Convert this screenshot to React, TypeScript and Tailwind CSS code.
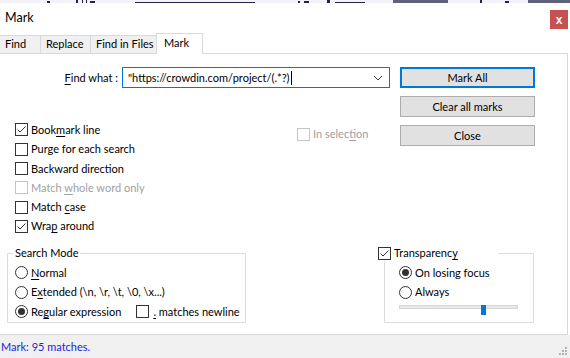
import React from 'react';

// Small helpers for the classic Win32 controls
const U: React.FC<{ children: React.ReactNode }> = ({ children }) => (
  <span className="underline decoration-1 underline-offset-[2px]">{children}</span>
);

const CheckBox: React.FC<{ checked?: boolean; disabled?: boolean }> = ({ checked, disabled }) => (
  <span
    className={`flex h-[13px] w-[13px] shrink-0 items-center justify-center border bg-white ${
      disabled ? 'border-[#c4c4c4]' : 'border-[#333333]'
    }`}
  >
    {checked && (
      <svg width="11" height="11" viewBox="0 0 11 11">
        <path d="M1.5 5.5 L4 8 L9.5 2.5" fill="none" stroke="#333333" strokeWidth="1" />
      </svg>
    )}
  </span>
);

const Radio: React.FC<{ checked?: boolean }> = ({ checked }) => (
  <span className="flex h-[13px] w-[13px] shrink-0 items-center justify-center rounded-full border border-[#333333] bg-white">
    {checked && <span className="h-[7px] w-[7px] rounded-full bg-[#333333]" />}
  </span>
);

const CheckRow: React.FC<{ checked?: boolean; disabled?: boolean; children: React.ReactNode }> = ({
  checked,
  disabled,
  children,
}) => (
  <div className={`flex h-[19.3px] items-center gap-[3px] ${disabled ? 'text-[#a0a0a0]' : ''}`}>
    <CheckBox checked={checked} disabled={disabled} />
    <span className="whitespace-nowrap">{children}</span>
  </div>
);

const RadioRow: React.FC<{ checked?: boolean; children: React.ReactNode }> = ({ checked, children }) => (
  <div className="flex h-[19.5px] items-center gap-[3px]">
    <Radio checked={checked} />
    <span className="whitespace-nowrap">{children}</span>
  </div>
);

const Button: React.FC<{ focused?: boolean; children: React.ReactNode }> = ({ focused, children }) => (
  <button
    className={`flex h-[21px] w-[135px] items-center justify-center bg-[#e1e1e1] ${
      focused ? 'border-2 border-[#0078d7]' : 'border border-[#adadad]'
    }`}
  >
    {children}
  </button>
);

const Tab: React.FC<{ width: string; children: React.ReactNode }> = ({ width, children }) => (
  <div className={`-ml-px h-[18px] whitespace-nowrap border border-b-0 border-[#d9d9d9] bg-[#f0f0f0] pl-[5px] ${width}`}>
    {children}
  </div>
);

export default function App() {
  return (
    <div className="flex h-[358px] w-[570px] flex-col overflow-hidden bg-white font-['Lato',sans-serif] text-[11px] leading-[16px] text-black">
      {/* sliver of the window behind */}
      <svg className="h-[3px] w-[570px] shrink-0 bg-[#f2f2f8]" viewBox="0 0 570 3">
        <g fill="#22224a">
          <rect x="47" y="1" width="3" height="2" />
          <rect x="76" y="0" width="2" height="3" />
          <rect x="82" y="0" width="1" height="3" />
          <rect x="86" y="0" width="1" height="3" />
          <rect x="90" y="1" width="5" height="2" />
          <rect x="135" y="2" width="120" height="1" />
          <rect x="298" y="1" width="2" height="2" />
          <rect x="304" y="1" width="5" height="2" />
          <rect x="327" y="0" width="3" height="3" />
          <rect x="335" y="2" width="30" height="1" />
          <rect x="393" y="0" width="55" height="3" opacity="0.7" />
          <rect x="480" y="0" width="2" height="3" />
          <rect x="505" y="1" width="4" height="2" />
          <rect x="528" y="0" width="42" height="3" opacity="0.7" />
        </g>
      </svg>

      {/* title bar */}
      <div className="flex h-[30px] items-start justify-between">
        <span className="mt-[7px] pl-[5px] text-[12.5px] leading-[16px]">Mark</span>
        <span className="mr-[2px] mt-[7px] flex h-[19px] w-[18px] items-center justify-center bg-[#c75050] font-['Liberation_Sans',sans-serif] text-[12px] font-bold leading-none text-white">
          x
        </span>
      </div>

      {/* tabs */}
      <div className="flex h-[20px] items-end">
        <Tab width="w-[42px]">Find</Tab>
        <Tab width="w-[51px]">Replace</Tab>
        <Tab width="w-[67px]">Find in Files</Tab>
        <div className="relative z-10 -mb-px -ml-px h-[21px] w-[47px] border border-b-0 border-[#d9d9d9] bg-white pl-[7px] pt-px">
          Mark
        </div>
      </div>

      {/* tab page */}
      <div className="flex w-[568px] flex-1 flex-col border-b border-r border-t border-[#d9d9d9] pt-[13px]">
        <div className="flex">
          <div className="w-[400px]">
            <div className="flex h-[21px] items-center">
              <span className="w-[122px] pr-[4px] text-right">
                <U>F</U>ind what :
              </span>
              <div className="flex h-[21px] w-[268px] items-center justify-between border border-[#0078d7] pl-[5px] pr-[6px]">
                <span className="flex items-center whitespace-nowrap">
                  "https://crowdin.com/project/(.*?)
                  <span className="ml-px h-[14px] w-px bg-black" />
                </span>
                <svg width="10" height="6" viewBox="0 0 10 6">
                  <path d="M1 1 L5 5 L9 1" fill="none" stroke="#444444" strokeWidth="1" />
                </svg>
              </div>
            </div>

            <div className="mt-[32.3px] flex">
              <div className="w-[297px] pl-[15px]">
                <CheckRow checked>
                  Book<U>m</U>ark line
                </CheckRow>
                <CheckRow>Purge for each search</CheckRow>
                <CheckRow>Backward direction</CheckRow>
                <CheckRow disabled>
                  Match <U>w</U>hole word only
                </CheckRow>
                <CheckRow>
                  Match <U>c</U>ase
                </CheckRow>
                <CheckRow checked>
                  Wra<U>p</U> around
                </CheckRow>
              </div>
              <div className="pt-[4.5px]">
                <CheckRow disabled>
                  In selec<U>t</U>ion
                </CheckRow>
              </div>
            </div>
          </div>

          <div className="flex flex-col gap-[8px]">
            <Button focused>Mark All</Button>
            <Button>Clear all marks</Button>
            <Button>Close</Button>
          </div>
        </div>

        {/* group boxes */}
        <div className="mt-[9px] flex items-start">
          <fieldset className="ml-[7px] h-[78px] w-[239px] min-w-0 border border-[#dcdcdc]">
            <legend className="ml-[5px] px-[2px] leading-[16px]">Search Mode</legend>
            <div className="pl-[7px] pt-[2px]">
              <RadioRow>
                <U>N</U>ormal
              </RadioRow>
              <RadioRow>
                E<U>x</U>tended (\n, \r, \t, \0, \x...)
              </RadioRow>
              <div className="flex items-center">
                <RadioRow checked>
                  Re<U>g</U>ular expression
                </RadioRow>
                <div className="ml-[15px] flex items-center gap-[4px]">
                  <CheckBox />
                  <span className="whitespace-nowrap">
                    <U>.</U> matches newline
                  </span>
                </div>
              </div>
            </div>
          </fieldset>

          <fieldset className="ml-[138px] h-[78px] w-[150px] min-w-0 border border-[#dcdcdc]">
            <legend className="-ml-[7px] flex w-[120px] items-center gap-[3px] leading-[16px]">
              <CheckBox checked />
              <span>
                Transparenc<U>y</U>
              </span>
            </legend>
            <div className="pl-[14px] pt-[2px]">
              <RadioRow checked>On losing focus</RadioRow>
              <RadioRow>Always</RadioRow>
              <div className="relative mt-[2px] h-[10px] w-[119px]">
                <div className="mt-[3px] h-[4px] border border-[#d6d6d6] bg-[#e7eaea]" />
                <div className="absolute left-[82px] top-0 h-[10px] w-[5px] bg-[#0078d7]" />
              </div>
            </div>
          </fieldset>
        </div>
      </div>

      {/* status bar */}
      <div className="flex h-[23px] items-center justify-between bg-[#f0f0f0] pl-px">
        <span className="text-[#2424d8]">Mark: 95 matches.</span>
        <svg className="mr-[2px] mt-[10px]" width="9" height="9" viewBox="0 0 9 9">
          <rect x="6" y="0" width="2" height="2" fill="#b4b4b4" />
          <rect x="3" y="3" width="2" height="2" fill="#b4b4b4" />
          <rect x="6" y="3" width="2" height="2" fill="#b4b4b4" />
          <rect x="0" y="6" width="2" height="2" fill="#b4b4b4" />
          <rect x="3" y="6" width="2" height="2" fill="#b4b4b4" />
          <rect x="6" y="6" width="2" height="2" fill="#b4b4b4" />
        </svg>
      </div>
    </div>
  );
}
